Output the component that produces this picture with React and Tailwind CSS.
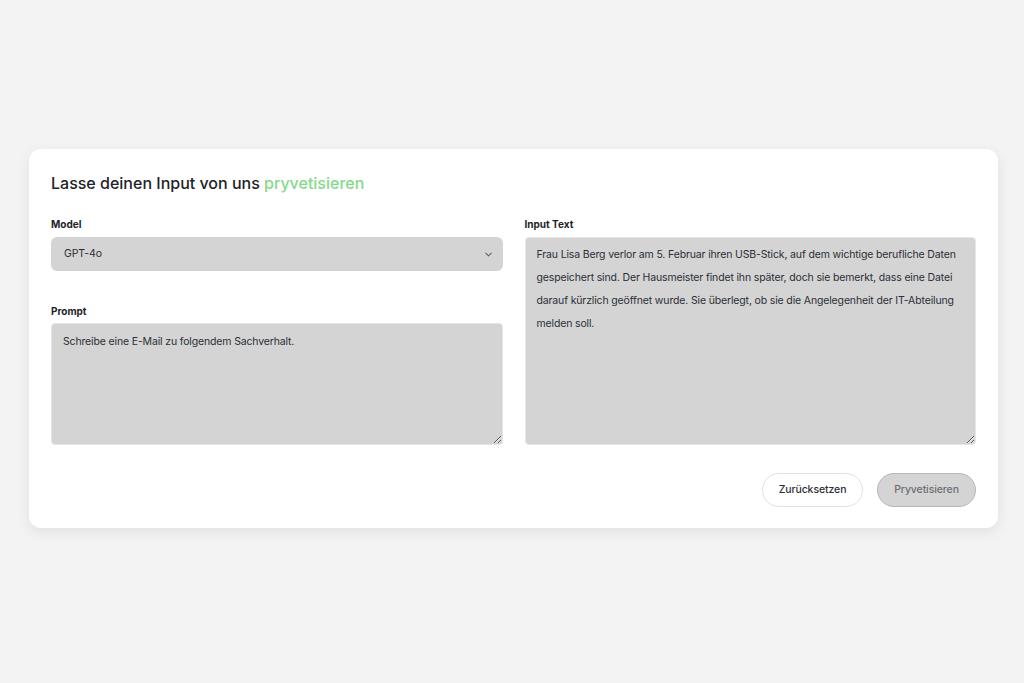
import React, { useState } from "react";

export default function App() {
  const [model, setModel] = useState("gpt-4o");
  const [prompt, setPrompt] = useState("Schreibe eine E-Mail zu folgendem Sachverhalt.");
  const [input, setInput] = useState(
    "Frau Lisa Berg verlor am 5. Februar ihren USB-Stick, auf dem wichtige berufliche Daten gespeichert sind. Der Hausmeister findet ihn später, doch sie bemerkt, dass eine Datei darauf kürzlich geöffnet wurde. Sie überlegt, ob sie die Angelegenheit der IT-Abteilung melden soll."
  );

  const reset = () => {
    setPrompt("");
    setInput("");
  };

  return (
    <div
      className="min-h-screen bg-[#f3f3f3] flex items-center justify-center pl-[29px] pr-[26px] pb-[6px]"
      style={{ fontFamily: "Inter, 'Noto Sans', sans-serif" }}
    >
      <div className="w-full bg-white rounded-[12px] shadow-[0_4px_14px_rgba(0,0,0,0.08)] p-[22px] pb-[21px]">
        <h1 className="text-[16px] leading-[24px] font-medium text-[#1f2328]">
          Lasse deinen Input von uns <span className="text-[#86d98a]">pryvetisieren</span>
        </h1>

        <div className="grid grid-cols-2 gap-[22px] mt-[22px]">
          <div className="flex flex-col">
            <label className="text-[10px] leading-[14px] font-bold text-[#1f2328]">Model</label>
            <div className="relative mt-[6px]">
              <select
                value={model}
                onChange={(e) => setModel(e.target.value)}
                className="w-full h-[34px] appearance-none bg-[#d4d4d4] rounded-[6px] pl-[13px] pr-8 text-[10.5px] tracking-[-0.1px] text-[#2b2f36] outline-none"
              >
                <option value="gpt-4o">GPT-4o</option>
                <option value="gpt-4">GPT-4</option>
              </select>
              <svg
                className="absolute right-[9px] top-[12px] pointer-events-none"
                width="11"
                height="11"
                viewBox="0 0 24 24"
                fill="none"
                stroke="#5f636a"
                strokeWidth="2.2"
                strokeLinecap="round"
                strokeLinejoin="round"
              >
                <path d="M6 9l6 6 6-6" />
              </svg>
            </div>

            <label className="text-[10px] leading-[14px] font-bold text-[#1f2328] mt-[33px]">Prompt</label>
            <textarea
              value={prompt}
              onChange={(e) => setPrompt(e.target.value)}
              className="mt-[5px] h-[122px] bg-[#d4d4d4] rounded-[4px] border border-[#e3e6ea] px-[11px] pt-[6px] text-[10.5px] tracking-[-0.15px] leading-[23px] text-[#2b2f36] outline-none"
            />
          </div>

          <div className="flex flex-col">
            <label className="text-[10px] leading-[14px] font-bold text-[#1f2328]">Input Text</label>
            <textarea
              value={input}
              onChange={(e) => setInput(e.target.value)}
              className="mt-[6px] h-[208px] bg-[#d4d4d4] rounded-[4px] border border-[#e3e6ea] px-[11px] pt-[5px] text-[10.5px] tracking-[-0.15px] leading-[23px] text-[#2b2f36] outline-none"
            />
          </div>
        </div>

        <div className="flex justify-end gap-[14px] mt-[28px]">
          <button
            onClick={reset}
            className="h-[34px] w-[101px] rounded-full bg-white border border-[#e2e2e2] text-[10.5px] tracking-[-0.1px] font-medium text-[#2b2f36]"
          >
            Zurücksetzen
          </button>
          <button className="h-[34px] w-[99px] rounded-full bg-[#d4d4d4] border border-[#b5b7ba] text-[10.5px] tracking-[-0.1px] font-medium text-[#6b6e73]">
            Pryvetisieren
          </button>
        </div>
      </div>
    </div>
  );
}
